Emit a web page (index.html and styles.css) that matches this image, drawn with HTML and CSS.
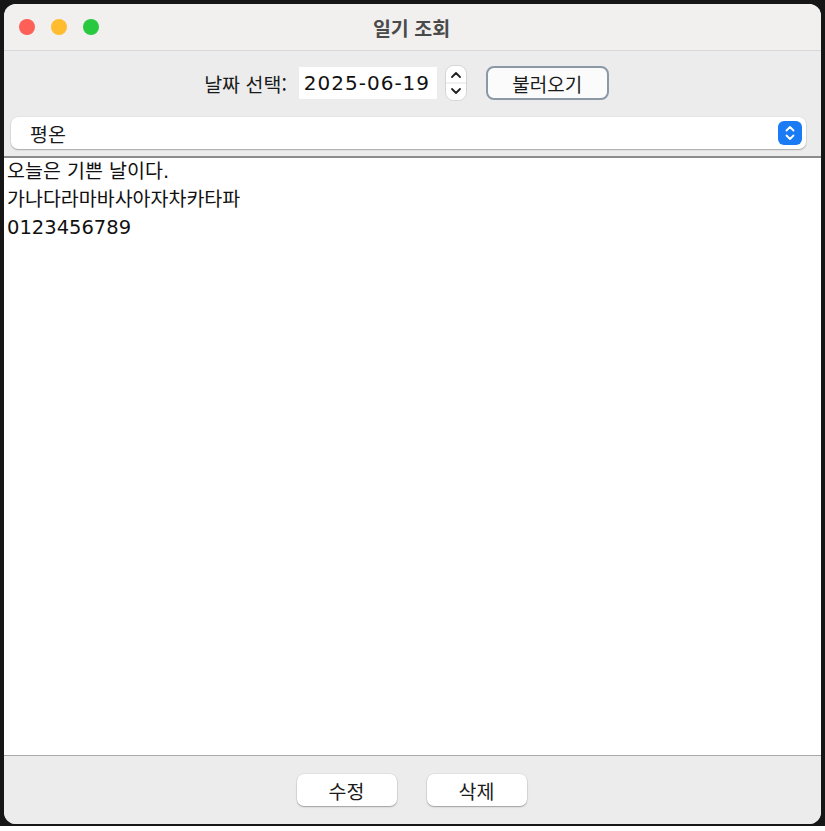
FILE: index.html
```html
<!DOCTYPE html>
<html lang="ko">
<head>
<meta charset="utf-8">
<title>일기 조회</title>
<link rel="stylesheet" href="styles.css">
</head>
<body>
<div class="screen">
  <div class="window">
    <div class="titlebar">
      <div class="lights">
        <span class="light red"></span>
        <span class="light yellow"></span>
        <span class="light green"></span>
      </div>
      <div class="title">일기 조회</div>
    </div>
    <div class="controls">
      <div class="date-row">
        <span class="label">날짜 선택:</span>
        <span class="date-field">2025-06-19</span>
        <span class="stepper">
          <svg width="22" height="36" viewBox="0 0 22 36">
            <rect x="0.5" y="0.5" width="21" height="35" rx="8" fill="#fff" stroke="#d4d4d4"/>
            <line x1="1" y1="18" x2="21" y2="18" stroke="#e2e2e2"/>
            <path d="M7 12 L11 8 L15 12" fill="none" stroke="#222" stroke-width="1.8" stroke-linecap="round" stroke-linejoin="round"/>
            <path d="M7 24 L11 28 L15 24" fill="none" stroke="#222" stroke-width="1.8" stroke-linecap="round" stroke-linejoin="round"/>
          </svg>
        </span>
        <button class="load-btn">불러오기</button>
      </div>
      <div class="combo">
        <span class="combo-text">평온</span>
        <span class="combo-arrows">
          <svg width="24" height="24" viewBox="0 0 24 24">
            <rect x="0" y="0" width="24" height="24" rx="6" fill="#1a7bf4"/>
            <path d="M8.5 9.5 L12 6 L15.5 9.5" fill="none" stroke="#fff" stroke-width="1.8" stroke-linecap="round" stroke-linejoin="round"/>
            <path d="M8.5 14.5 L12 18 L15.5 14.5" fill="none" stroke="#fff" stroke-width="1.8" stroke-linecap="round" stroke-linejoin="round"/>
          </svg>
        </span>
      </div>
    </div>
    <div class="editor">
      <div class="line">오늘은 기쁜 날이다.</div>
      <div class="line">가나다라마바사아자차카타파</div>
      <div class="line">0123456789</div>
    </div>
    <div class="footer">
      <button class="btn">수정</button>
      <button class="btn">삭제</button>
    </div>
  </div>
</div>
</body>
</html>
```

FILE: styles.css
```css
html, body {
  margin: 0;
  padding: 0;
  background: #ffffff;
}
body {
  width: 825px;
  height: 831px;
  overflow: hidden;
  font-family: "Noto Sans CJK KR", "Noto Sans", sans-serif;
}
.screen {
  width: 825px;
  height: 826px;
  background: #161616;
  padding: 4px 4px 2px 4px;
  box-sizing: border-box;
  display: flex;
}
.window {
  flex: 1;
  display: flex;
  flex-direction: column;
  border-radius: 12px;
  overflow: hidden;
  background: #ececec;
}
.titlebar {
  height: 46px;
  background: #f1f0ef;
  border-bottom: 1px solid #d9d9d9;
  display: flex;
  align-items: center;
  position: relative;
  flex: none;
}
.lights {
  display: flex;
  gap: 16px;
  padding-left: 15px;
}
.light {
  width: 16px;
  height: 16px;
  border-radius: 50%;
  display: block;
}
.red { background: #fe5f57; }
.yellow { background: #febc2e; }
.green { background: #28c840; }
.title {
  position: absolute;
  left: 0;
  right: 0;
  text-align: center;
  font-size: 19.5px;
  font-weight: 700;
  color: #4a4a4a;
  padding-right: 2px;
}
.controls {
  flex: none;
  height: 107px;
  background: #ececec;
  border-bottom: 2px solid #8c8c8c;
  display: flex;
  flex-direction: column;
  box-sizing: border-box;
}
.date-row {
  height: 62px;
  display: flex;
  align-items: center;
  justify-content: center;
  padding-right: 12px;
  padding-top: 1px;
}
.label {
  font-size: 19.5px;
  color: #1a1a1a;
  margin-right: 12px;
}
.date-field {
  width: 138px;
  height: 32px;
  background: #fff;
  font-family: "DejaVu Sans", "Noto Sans CJK KR", sans-serif;
  font-size: 20px;
  line-height: 32px;
  color: #111;
  padding-left: 5px;
  box-sizing: border-box;
  letter-spacing: 1px;
}
.stepper {
  display: block;
  height: 36px;
  margin-left: 8px;
}
.load-btn {
  margin-left: 19px;
  width: 123px;
  height: 34px;
  border: 2px solid #8b99a6;
  border-radius: 8px;
  background: #fbfbfb;
  font-family: inherit;
  font-size: 19px;
  color: #1a1a1a;
  padding: 0;
}
.combo {
  margin: 3px 15px 0 7px;
  height: 32px;
  background: #fff;
  border-radius: 7px;
  box-shadow: 0 1px 1.5px rgba(0,0,0,0.28), 0 0 0 0.5px rgba(0,0,0,0.06);
  display: flex;
  align-items: center;
  justify-content: space-between;
}
.combo-text {
  font-size: 19.5px;
  color: #1a1a1a;
  padding-left: 19px;
}
.combo-arrows {
  display: block;
  height: 24px;
  margin-right: 4px;
}
.editor {
  flex: 1;
  background: #fff;
  border-bottom: 1px solid #a8a8a8;
  padding: 0 3px;
  font-family: "DejaVu Sans", "Noto Sans CJK KR", sans-serif;
  font-size: 19.5px;
  line-height: 28px;
  color: #111;
}
.footer {
  flex: none;
  height: 68px;
  background: #ececec;
  display: flex;
  align-items: center;
  justify-content: center;
  gap: 30px;
  padding-right: 2px;
}
.btn {
  width: 100px;
  height: 32px;
  background: #fff;
  border: none;
  border-radius: 7px;
  box-shadow: 0 1px 1.5px rgba(0,0,0,0.3), 0 0 0 0.5px rgba(0,0,0,0.08);
  font-family: inherit;
  font-size: 19.5px;
  color: #1a1a1a;
  padding: 0;
}
```
